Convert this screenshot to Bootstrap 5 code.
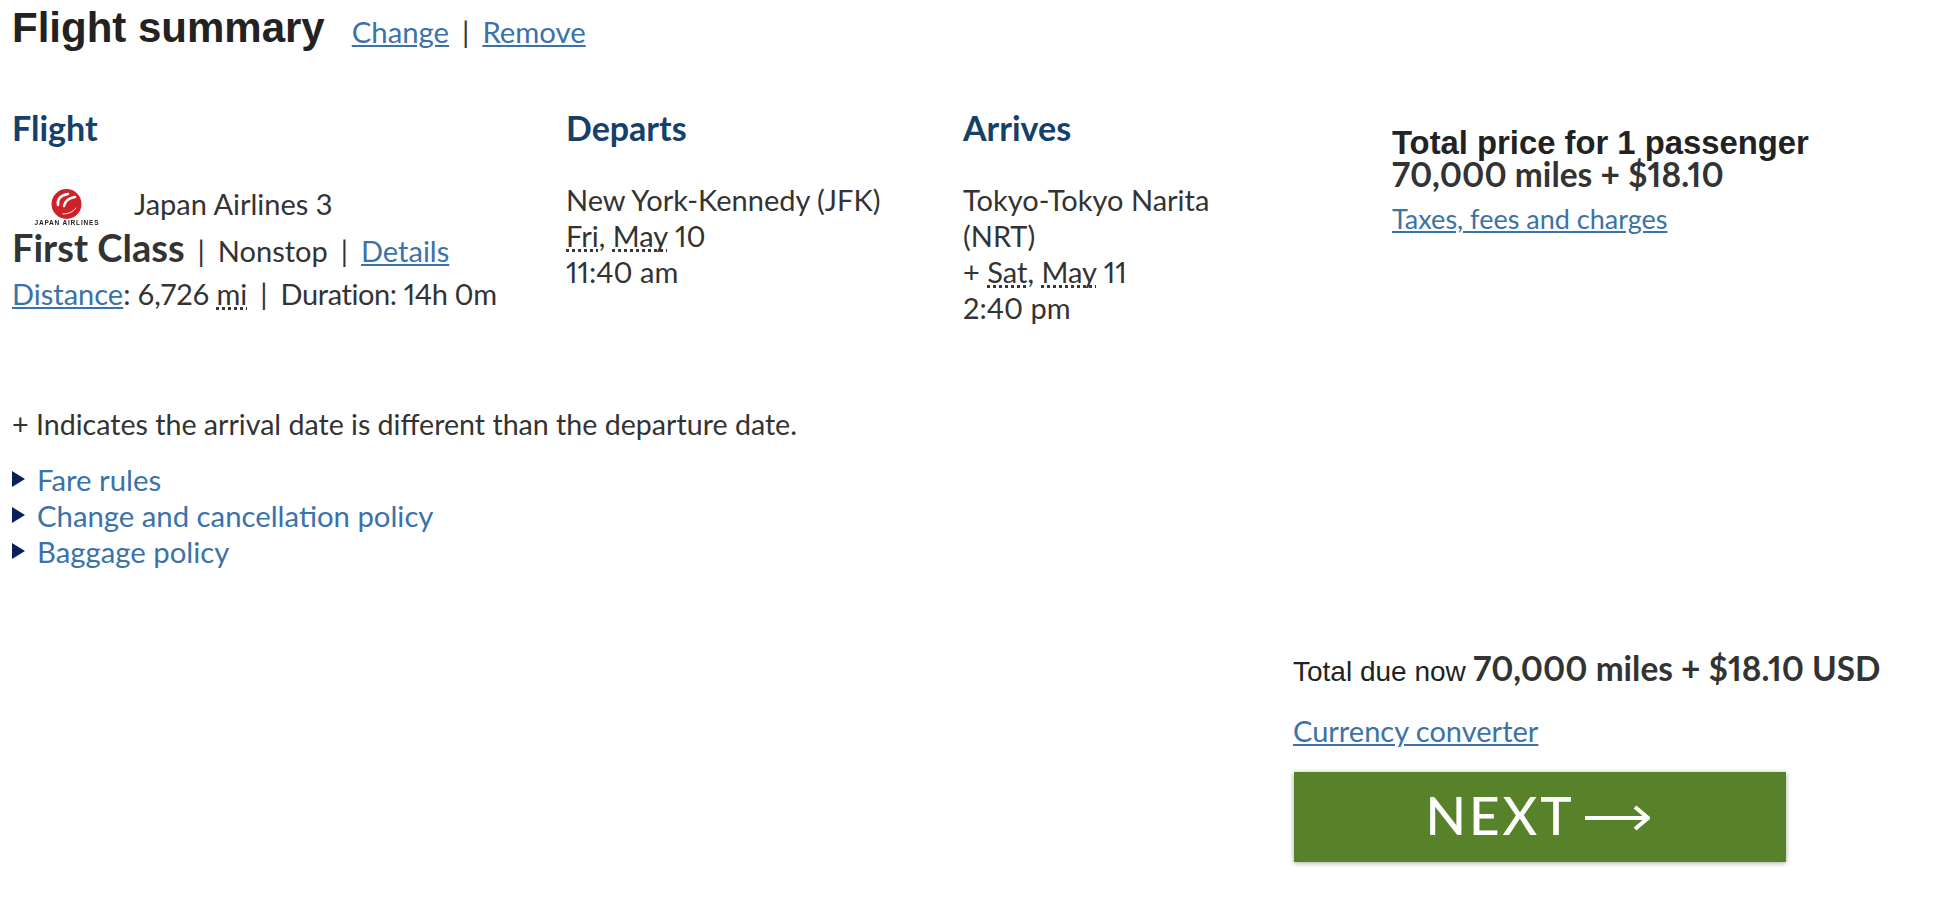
<!DOCTYPE html>
<html lang="en">
<head>
<meta charset="utf-8">
<title>Flight summary</title>
<link rel="stylesheet" href="https://cdn.jsdelivr.net/npm/bootstrap@5.3.0/dist/css/bootstrap.min.css">
<style>
html,body{height:100%;}
body{font-family:Lato,"Liberation Sans",sans-serif;font-size:29px;line-height:36px;color:#333;background:#fff;overflow:hidden;font-variant-numeric:proportional-nums;}
a{color:#3a72a9;}
.page-wrap{padding:0 0 0 12px;position:relative;}
.summary-head{padding-top:5px;height:108px;}
.summary-title{font-family:"Liberation Sans",sans-serif;font-weight:700;font-size:42px;line-height:46px;color:#222;margin:0 27px 0 0;}
.head-links{margin-top:9px;font-size:29.300px;}
.flight-grid{display:grid;grid-template-columns:554px 397px 429px 1fr;}
.col-label{color:#15406a;font-weight:700;font-size:34px;line-height:40px;margin:0 0 34px;}
.air-logo{width:67px;height:38px;margin:6px 34px 0 21px;flex:none;filter:blur(.6px);}
.air-name{font-size:6.500px;font-weight:700;font-family:"Liberation Sans",sans-serif;}
.crane-line{fill:none;stroke:#fff;stroke-linecap:round;}
.class-row{margin-top:3px;}
.class-name{font-weight:700;font-size:38px;}
.pipe{margin:0 13px;}
.dist-row{margin-top:7px;}
.dur-text{letter-spacing:-.4px;}
.price-col{padding-top:19px;}
.price-title{font-family:"Liberation Sans",sans-serif;font-weight:700;font-size:32.800px;line-height:31px;color:#222;}
.price-val{font-weight:700;font-size:33.500px;line-height:32px;margin-bottom:10px;}
.price-link{font-size:27px;}
.note-line{margin-top:80px;font-size:28.600px;}
.policy-list{list-style:none;padding:0;margin:20px 0 0;font-size:29.300px;}
.policy-list a{text-decoration:none;}
.tri{width:0;height:0;border-left:13px solid #0a1f5c;border-top:8px solid transparent;border-bottom:8px solid transparent;margin-right:12px;margin-top:9px;flex:none;align-self:flex-start;}
.checkout{margin:80px 0 0 1281px;}
.due-label{font-family:"Liberation Sans",sans-serif;font-size:28px;color:#222;}
.due-val{font-weight:700;font-size:33.400px;}
.convert-row{margin-top:23px;}
.next-btn{width:492px;height:90px;margin:23px 0 0 1px;padding:0 17px 0 12px;background:#588229;color:#fff;border-radius:0;border:0;box-shadow:0 1px 5px rgba(0,0,0,.35);font-size:53px;font-weight:500;letter-spacing:3px;line-height:1;}
.next-btn:hover{background:#588229;color:#fff;}
.next-word{margin-bottom:5px;}
.next-arrow{margin-left:10px;}
</style>
</head>
<body>
<div class="page-wrap">
  <div class="summary-head d-flex">
    <h1 class="summary-title">Flight summary</h1>
    <div class="head-links"><a href="#">Change</a><span class="pipe">|</span><a href="#">Remove</a></div>
  </div>
  <div class="flight-grid">
    <div>
      <h2 class="col-label">Flight</h2>
      <div class="d-flex align-items-center">
        <svg class="air-logo" viewBox="0 0 67 38" role="img" aria-label="Japan Airlines logo">
          <circle cx="33.500" cy="16" r="15" fill="#cc2229"/>
          <path class="crane-line" stroke-width="2.500" d="M25 17C24 11 28 7 35 6"/>
          <path class="crane-line" stroke-width="2.500" d="M31 18C32 13 36 10 42 9"/>
          <path class="crane-line" stroke-width="1" d="M30 26C35 26 40 24 43 20"/>
          <text x="33.500" y="37" text-anchor="middle" class="air-name" fill="#222" textLength="64">JAPAN AIRLINES</text>
        </svg>
        <span>Japan Airlines 3</span>
      </div>
      <div class="class-row"><span class="class-name">First Class</span><span class="pipe">|</span>Nonstop<span class="pipe">|</span><a href="#">Details</a></div>
      <div class="dist-row"><a href="#">Distance</a>: 6,726 <abbr title="miles">mi</abbr><span class="pipe">|</span><span class="dur-text">Duration: 14h 0m</span></div>
    </div>
    <div>
      <h2 class="col-label">Departs</h2>
      <div>New York-Kennedy (JFK)</div>
      <div><abbr title="Friday">Fri</abbr>, <abbr title="May">May</abbr> 10</div>
      <div>11:40 am</div>
    </div>
    <div>
      <h2 class="col-label">Arrives</h2>
      <div>Tokyo-Tokyo Narita<br>(NRT)</div>
      <div>+ <abbr title="Saturday">Sat</abbr>, <abbr title="May">May</abbr> 11</div>
      <div>2:40 pm</div>
    </div>
    <div class="price-col">
      <div class="price-title">Total price for 1 passenger</div>
      <div class="price-val">70,000 miles + $18.10</div>
      <a class="price-link" href="#">Taxes, fees and charges</a>
    </div>
  </div>
  <p class="note-line mb-0">+ Indicates the arrival date is different than the departure date.</p>
  <ul class="policy-list">
    <li class="d-flex"><span class="tri"></span><a href="#">Fare rules</a></li>
    <li class="d-flex"><span class="tri"></span><a href="#">Change and cancellation policy</a></li>
    <li class="d-flex"><span class="tri"></span><a href="#">Baggage policy</a></li>
  </ul>
  <div class="checkout">
    <div><span class="due-label">Total due now</span> <span class="due-val">70,000 miles + $18.10 USD</span></div>
    <div class="convert-row"><a href="#">Currency converter</a></div>
    <button type="button" class="btn next-btn d-flex align-items-center justify-content-center"><span class="next-word">NEXT</span>
      <svg class="next-arrow" width="65" height="30" viewBox="0 0 65 30" aria-hidden="true"><path d="M0 16H62M50 5l13 11-13 11" fill="none" stroke="#fff" stroke-width="4"/></svg>
    </button>
  </div>
</div>
<script src="https://cdn.jsdelivr.net/npm/bootstrap@5.3.0/dist/js/bootstrap.bundle.min.js"></script>
</body>
</html>
